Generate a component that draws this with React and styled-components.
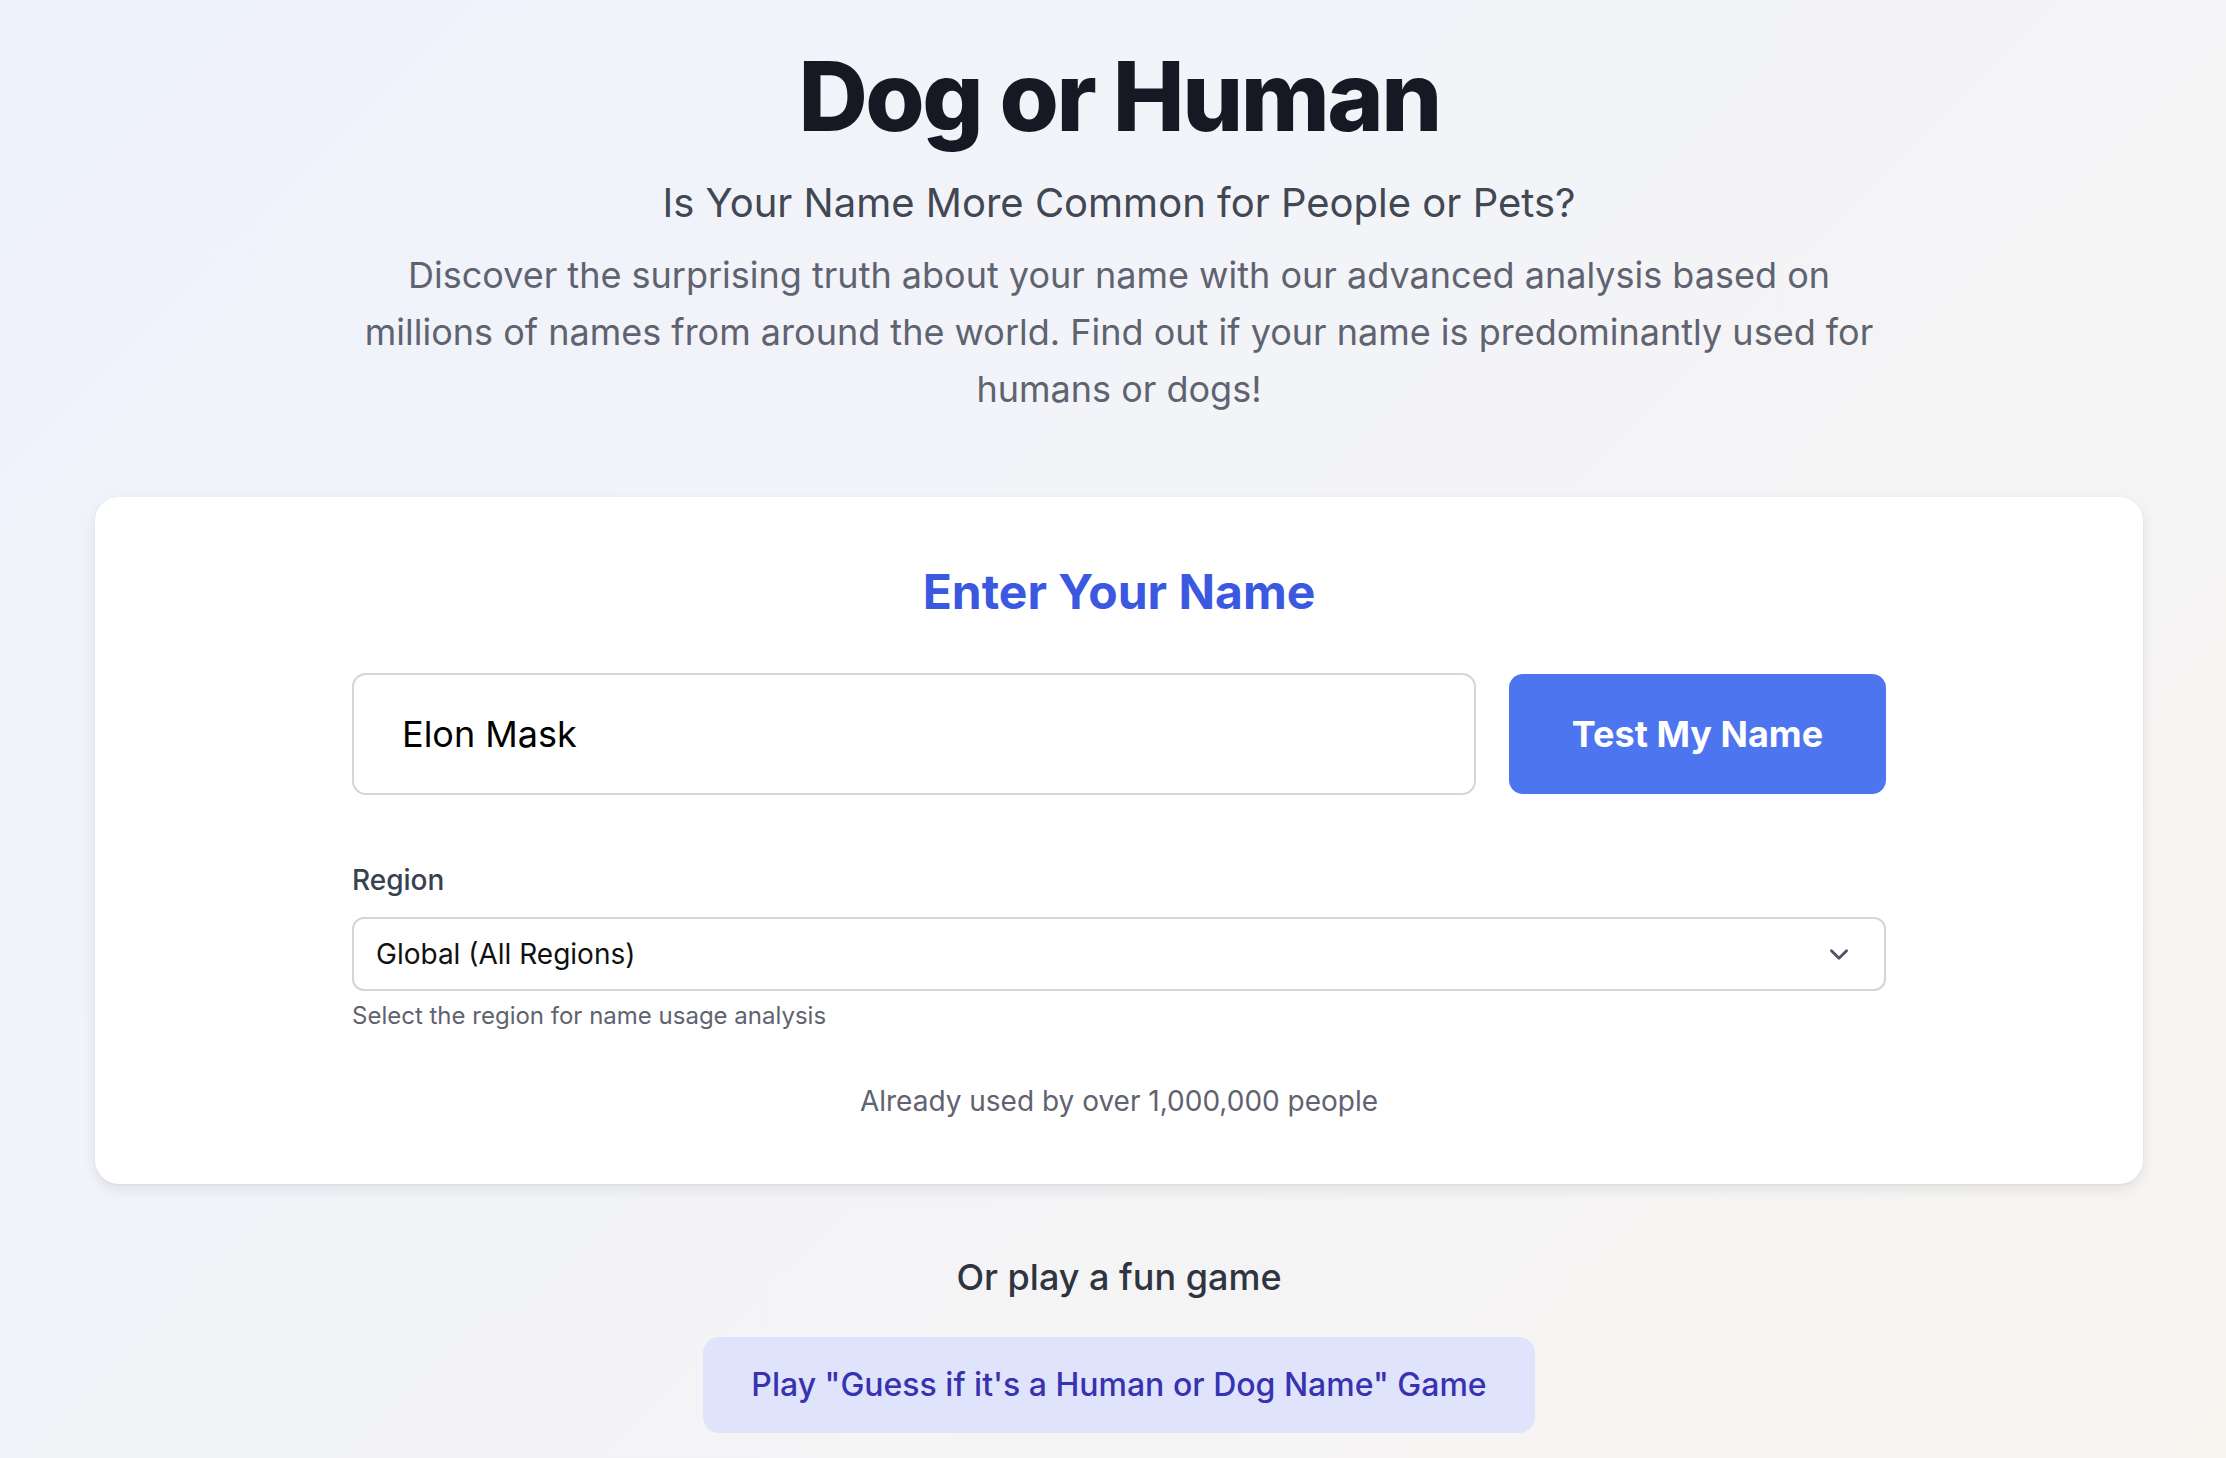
import React, {useState} from 'react';
import styled, {createGlobalStyle} from 'styled-components';

const GlobalStyle = createGlobalStyle`
  * {
    box-sizing: border-box;
  }

  html, body {
    margin: 0;
    padding: 0;
  }

  body {
    font-family: Inter, "Noto Sans", "Liberation Sans", sans-serif;
    background: linear-gradient(135deg, #eef2fb 0%, #f3f4f8 45%, #f8f5f1 100%);
    min-height: 100vh;
  }
`

const Page = styled.main`
  min-height: 100vh;
  display: flex;
  flex-direction: column;
  align-items: center;
  padding: 48px 0 40px 12px;
`

const Hero = styled.header`
  display: flex;
  flex-direction: column;
  align-items: center;
  text-align: center;
`

const Title = styled.h1`
  margin: 0;
  font-size: 96px;
  line-height: 1;
  font-weight: 800;
  letter-spacing: -2.5px;
  color: #161823;
`

const Subtitle = styled.h2`
  margin: 29px 0 0;
  font-size: 40px;
  line-height: 60px;
  font-weight: 400;
  color: #414753;
`

const Lead = styled.p`
  margin: 14px 0 0;
  max-width: 1640px;
  font-size: 36px;
  line-height: 57px;
  color: #5f6370;
`

const Card = styled.section`
  width: 2048px;
  margin-top: 79px;
  padding: 66px 0 62px;
  background: #fff;
  border-radius: 24px;
  box-shadow: 0 6px 14px rgba(15, 23, 42, 0.08), 0 1px 3px rgba(15, 23, 42, 0.05);
  display: flex;
  flex-direction: column;
  align-items: center;
`

const CardTitle = styled.h3`
  margin: 0;
  font-size: 48px;
  line-height: 58px;
  font-weight: 700;
  color: #3b58e0;
`

const Form = styled.div`
  width: 1534px;
  margin-top: 52px;
  display: flex;
  flex-direction: column;
`

const InputRow = styled.div`
  display: flex;
  align-items: center;
  gap: 33px;
`

const NameInput = styled.input`
  flex: 1;
  height: 122px;
  padding: 0 48px;
  border: 2px solid #d3d5da;
  border-radius: 14px;
  font-family: inherit;
  font-size: 36px;
  color: #000;
  background: #fff;
  outline: none;
`

const PrimaryButton = styled.button`
  width: 377px;
  height: 120px;
  border: none;
  border-radius: 14px;
  background: #4d75ef;
  color: #fff;
  font-family: inherit;
  font-size: 36px;
  font-weight: 700;
  cursor: pointer;
`

const Label = styled.label`
  margin-top: 64px;
  font-size: 28px;
  line-height: 42px;
  font-weight: 500;
  color: #374151;
`

const SelectBox = styled.div`
  margin-top: 16px;
  height: 74px;
  padding: 0 22px;
  border: 2px solid #d3d5da;
  border-radius: 12px;
  display: flex;
  align-items: center;
  justify-content: space-between;
  font-size: 28px;
  color: #111;
`

const Chevron = styled.svg`
  width: 26px;
  height: 26px;
  margin-right: 10px;
  color: #4b5563;
`

const Help = styled.p`
  margin: 8px 0 0;
  font-size: 24px;
  line-height: 33px;
  color: #5f6370;
`

const Note = styled.p`
  margin: 48px 0 0;
  text-align: center;
  font-size: 28px;
  line-height: 42px;
  color: #5f6370;
`

const GameSection = styled.div`
  display: flex;
  flex-direction: column;
  align-items: center;
  margin-top: 66px;
`

const GameHeading = styled.h4`
  margin: 0;
  font-size: 36px;
  line-height: 54px;
  font-weight: 500;
  color: #2f3441;
`

const GameButton = styled.button`
  margin-top: 33px;
  padding: 24px 48px;
  border: none;
  border-radius: 16px;
  background: #dfe4fc;
  color: #3832b0;
  font-family: inherit;
  font-size: 32px;
  line-height: 48px;
  font-weight: 500;
  cursor: pointer;
`

const App = () => {
	const [name, setName] = useState('Elon Mask')

	return (
		<>
			<GlobalStyle/>
			<Page>
				<Hero>
					<Title>Dog or Human</Title>
					<Subtitle>Is Your Name More Common for People or Pets?</Subtitle>
					<Lead>
						Discover the surprising truth about your name with our advanced analysis based on<br/>
						millions of names from around the world. Find out if your name is predominantly used for<br/>
						humans or dogs!
					</Lead>
				</Hero>

				<Card>
					<CardTitle>Enter Your Name</CardTitle>
					<Form>
						<InputRow>
							<NameInput
								value={name}
								onChange={e => setName(e.target.value)}
							/>
							<PrimaryButton>Test My Name</PrimaryButton>
						</InputRow>

						<Label>Region</Label>
						<SelectBox>
							<span>Global (All Regions)</span>
							<Chevron viewBox="0 0 24 24" fill="none" stroke="currentColor" strokeWidth="2.6"
									 strokeLinecap="round" strokeLinejoin="round">
								<path d="M5 9l7 7 7-7"/>
							</Chevron>
						</SelectBox>
						<Help>Select the region for name usage analysis</Help>

						<Note>Already used by over 1,000,000 people</Note>
					</Form>
				</Card>

				<GameSection>
					<GameHeading>Or play a fun game</GameHeading>
					<GameButton>Play "Guess if it's a Human or Dog Name" Game</GameButton>
				</GameSection>
			</Page>
		</>
	);
};

export default App;
